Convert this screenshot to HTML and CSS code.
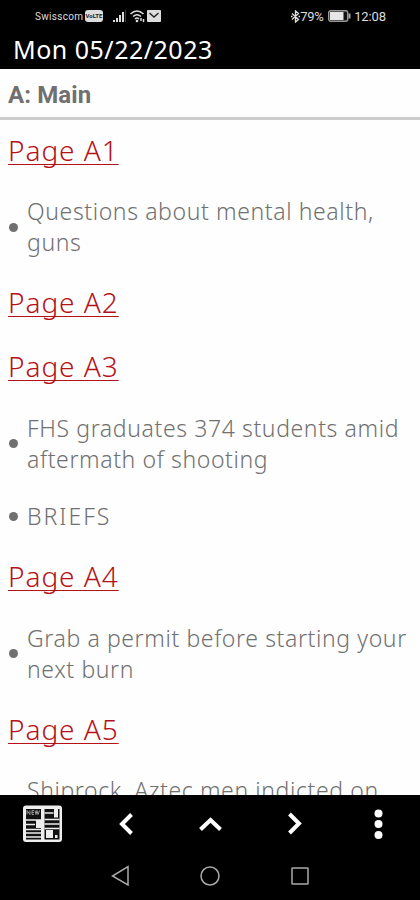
FILE: index.html
```html
<!doctype html>
<html lang="en">
<head>
    <meta charset="UTF-8">
    <meta name="viewport" content="width=device-width, initial-scale=1.0">
    <title>Mon 05/22/2023</title>
    <link rel="stylesheet" href="styles.css">
</head>
<body>
<div class="container">
    <div class="status">
        <div class="status-left">
            <span class="carrier">Swisscom</span>
            <span class="volte">VoLTE</span>
            <svg class="signal" width="13" height="13" viewBox="0 0 13 13">
                <path d="M1 10v2M4 8v4M7 5v7M10 2v10" stroke="#ddd" stroke-width="2"/>
                <path d="M12.4 0v12" stroke="#444" stroke-width="1"/>
            </svg>
            <svg class="wifi" width="15" height="13" viewBox="0 0 15 13" fill="none" stroke="#ddd" stroke-width="1.5">
                <path d="M0.500 4Q7 -2 13.500 4M3 6.500Q7 3 11 6.500M5 9Q7 7 9 9"/>
                <circle cx="7" cy="11" r="1.300" fill="#ddd" stroke="none"/>
                <path d="M11 8v3M13.500 9v3" stroke-width="1.500"/>
            </svg>
            <svg class="mail" width="14" height="12" viewBox="0 0 14 12">
                <rect width="14" height="12" rx="1" fill="#ddd"/>
                <path d="M2.500 3L7 7l4.500-4" fill="none" stroke="#222" stroke-width="1.400"/>
            </svg>
        </div>
        <div class="status-right">
            <svg width="9" height="13" viewBox="0 0 9 13" fill="none" stroke="#ddd" stroke-width="1.300">
                <path d="M1 3.500l6.500 6L4.500 12V1l3 2.500-6.500 6M0 6.500h1.500M7.500 6.500H9"/>
            </svg>
            <span class="percent">79%</span>
            <svg class="battery" width="23" height="12" viewBox="0 0 23 12">
                <rect x=".7" y=".7" width="19" height="10.600" rx="2" fill="#111" stroke="#999" stroke-width="1.400"/>
                <rect x="2" y="2" width="13.500" height="8" fill="#e6e6e6"/>
                <path d="M21.500 3.500v5" stroke="#aaa" stroke-width="2"/>
            </svg>
            <span class="clock">12:08</span>
        </div>
    </div>
    <div class="title">Mon 05/22/2023</div>
    <div class="section"><span>A: Main</span></div>
    <div class="content">
        <a href="#a1" class="page"><span>Page A1</span></a>
        <div class="story"><i class="dot"></i><p>Questions about mental health,<br>guns</p></div>
        <a href="#a2" class="page"><span>Page A2</span></a>
        <a href="#a3" class="page"><span>Page A3</span></a>
        <div class="story"><i class="dot"></i><p>FHS graduates 374 students amid<br>aftermath of shooting</p></div>
        <div class="story caps"><i class="dot"></i><p>BRIEFS</p></div>
        <a href="#a4" class="page"><span>Page A4</span></a>
        <div class="story"><i class="dot"></i><p>Grab a permit before starting your<br>next burn</p></div>
        <a href="#a5" class="page"><span>Page A5</span></a>
        <div class="story cut"><p>Shiprock, Aztec men indicted on</p></div>
    </div>
    <div class="toolbar">
        <svg width="40" height="38" viewBox="0 0 40 38">
            <rect x="1" y="0.500" width="39" height="36.500" rx="3" fill="#eee"/>
            <path d="M4 4h15v30.500H4zM22.500 4h15v30.500h-15z" fill="#111"/>
            <path d="M5 9.500V5.500l3 4v-4M12 5.500h-2v4h2M10 7.500h2M13 5.500l1 4 1-4 1 4 1.500-4" fill="none" stroke="#999" stroke-width="1"/>
            <path d="M4 15h15M4 19.500h9M4 24.500h15M4 28h15M4 32h15M22.500 8h9M22.500 14.500h15M22.500 19h15M22.500 23.500h15" stroke="#eee" stroke-width="1.500"/>
            <path d="M14 15h5v8h-5zM32 4h4v8.500h-4zM24 25h7v8h-7zM33 30h2.500v3H33z" fill="#eee"/>
        </svg>
        <svg width="40" height="38" viewBox="0 0 40 38" class="arrow"><path d="M25.500 9.500L16 19l9.500 9.500"/></svg>
        <svg width="40" height="38" viewBox="0 0 40 38" class="arrow"><path d="M10.500 24.500L20.500 15l10 9.500"/></svg>
        <svg width="40" height="38" viewBox="0 0 40 38" class="arrow"><path d="M15.500 9L25 18.500 15.500 28"/></svg>
        <svg width="40" height="38" viewBox="0 0 40 38" fill="#fff">
            <circle cx="20.500" cy="8.500" r="4"/><circle cx="20.500" cy="19" r="4"/><circle cx="20.500" cy="30" r="4"/>
        </svg>
    </div>
    <div class="navbar">
        <svg width="20" height="22" viewBox="0 0 20 22"><path d="M18 1.500v18.500L2.500 11z"/></svg>
        <svg width="22" height="22" viewBox="0 0 22 22"><circle cx="11" cy="11" r="9"/></svg>
        <svg width="20" height="22" viewBox="0 0 20 22"><rect x="2" y="3" width="16" height="16" rx=".5"/></svg>
    </div>
</div>
</body>
</html>
```

FILE: styles.css
```css
html, body {
    width: 100%;
    height: 100%;
    margin: 0;
    padding: 0;
    overflow: hidden;
}

.container {
    height: 100%;
    display: flex;
    flex-direction: column;
    background: #fefefe;
    color: #707070;
    font-family: "Noto Sans", "Open Sans", sans-serif;
}

.status {
    height: 32px;
    flex: none;
    display: flex;
    align-items: center;
    justify-content: space-between;
    padding: 0 34px 0 35px;
    background: #000;
    color: #ddd;
    font-family: Roboto, sans-serif;
    font-size: 12px;
}

.status-left, .status-right {
    display: flex;
    align-items: center;
    white-space: nowrap;
}

.carrier {
    width: 50px;
    font-size: 10px;
    letter-spacing: 0.3px;
}

.volte {
    width: 18px;
    height: 12px;
    line-height: 12px;
    border-radius: 3px;
    background: #ddd;
    color: #222;
    font-size: 6px;
    font-weight: bold;
    text-align: center;
}

.signal {
    margin-left: 10px;
}

.wifi {
    margin-left: 4px;
}

.mail {
    margin-left: 2px;
}

.percent {
    width: 25px;
    font-size: 13px;
    letter-spacing: -0.3px;
}

.battery {
    margin: 0 3px;
}

.clock {
    font-size: 13px;
    letter-spacing: -0.1px;
}

.title {
    height: 37px;
    line-height: 34px;
    flex: none;
    padding-left: 13px;
    background: #000;
    color: #fff;
    font-size: 25px;
    letter-spacing: 0.5px;
}

.section {
    height: 48px;
    line-height: 53px;
    flex: none;
    padding-left: 8px;
    border-bottom: 3px solid #ccc;
    font-family: Roboto, sans-serif;
    font-size: 24px;
    font-weight: bold;
    letter-spacing: 0.1px;
}

.content {
    flex: 1;
    min-height: 0;
    overflow: hidden;
    margin-top: -1px;
}

.page {
    display: flex;
    align-items: center;
    box-sizing: border-box;
    height: 64px;
    padding: 0 0 3px 8px;
    color: #b51218;
    font-size: 28px;
    font-weight: 300;
    letter-spacing: 0.95px;
    text-decoration: underline;
    text-decoration-thickness: 1px;
    text-underline-offset: 3px;
    text-decoration-skip-ink: none;
}

.story {
    display: flex;
    align-items: center;
    padding: 13.25px 0 13.25px 9px;
    font-size: 23px;
    font-weight: 300;
    letter-spacing: 0.61px;
    line-height: 31px;
    white-space: nowrap;
}

.story p {
    margin: 0;
}

.caps {
    letter-spacing: 2px;
}

.dot {
    width: 9px;
    height: 9px;
    margin-right: 9px;
    border-radius: 50%;
    background: #707070;
}

.cut {
    padding-left: 27px;
}

.toolbar {
    height: 57px;
    flex: none;
    display: flex;
    align-items: center;
    justify-content: space-between;
    padding: 0 22px;
    background: #000;
}

.arrow {
    fill: none;
    stroke: #fff;
    stroke-width: 4;
}

.navbar {
    height: 48px;
    flex: none;
    display: flex;
    align-items: center;
    justify-content: center;
    gap: 69px;
    background: #000;
}

.navbar svg {
    fill: none;
    stroke: #aaa;
    stroke-width: 1.5;
}
```
